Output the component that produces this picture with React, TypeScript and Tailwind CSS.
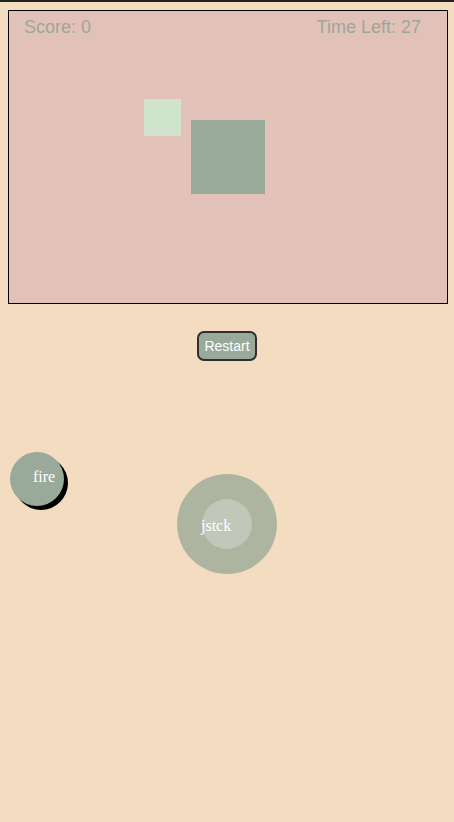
export default function App() {
  return (
    <div className="min-h-[822px] w-full bg-[#f3dcc0] font-['Liberation_Sans',Arial,sans-serif]">
      <div className="h-[2px] bg-[#222222]" />
      <div className="px-[8px] pt-[8px]">
        {/* game field */}
        <div className="relative h-[294px] w-[440px] border border-black bg-[#e2c1b8]">
          <span className="absolute left-[15px] top-[5px] text-[18px] leading-[22px] text-[#9aa89a]">
            Score: 0
          </span>
          <span className="absolute right-[26px] top-[5px] text-[18px] leading-[22px] text-[#9aa89a]">
            Time Left: 27
          </span>
          <div className="absolute left-[135px] top-[88px] h-[37px] w-[37px] bg-[#d0e3cc]" />
          <div className="absolute left-[182px] top-[109px] h-[74px] w-[74px] bg-[#99a99a]" />
        </div>
      </div>

      <div className="mt-[27px] flex justify-center">
        <button
          type="button"
          className="h-[30px] w-[60px] rounded-[7px] border-2 border-[#2f2f2f] bg-[#99a99a] text-[14px] text-white"
        >
          Restart
        </button>
      </div>

      <div className="flex items-start">
        <div className="ml-[10px] mt-[91px] flex h-[54px] w-[54px] items-center rounded-full bg-[#99a99a] pl-[23px] font-['Liberation_Serif','Times_New_Roman',serif] text-[16px] text-white shadow-[4px_4px_0_#000]">
          <span className="-mt-[5px]">fire</span>
        </div>
        <div className="ml-[113px] mt-[113px] flex h-[100px] w-[100px] items-center justify-center rounded-full bg-[#adb5a1]">
          <div className="flex h-[50px] w-[50px] items-center rounded-full bg-[#c1c8b9] font-['Liberation_Serif','Times_New_Roman',serif] text-[16px] text-white">
            <span className="-ml-[1px] mt-[3px]">jstck</span>
          </div>
        </div>
      </div>
    </div>
  );
}
